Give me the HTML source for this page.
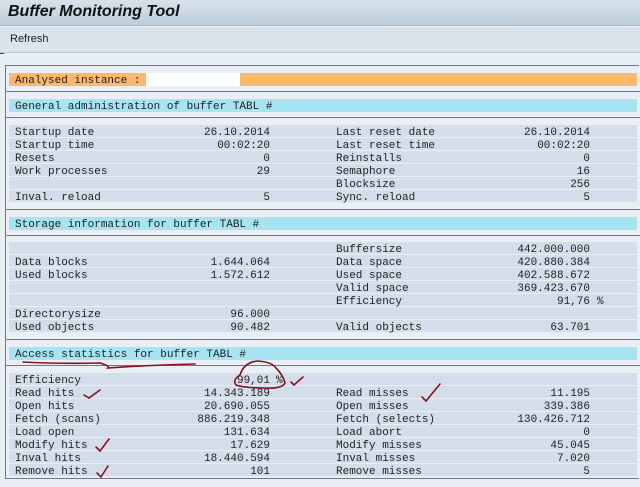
<!DOCTYPE html>
<html><head><meta charset="utf-8"><style>
*{margin:0;padding:0;box-sizing:border-box}
body{width:640px;height:487px;overflow:hidden;background:#e9eff5;position:relative;font-family:"Liberation Mono",monospace;font-size:11px;color:#222}
.t{position:absolute;left:0;top:0;width:640px;height:26px;background:linear-gradient(#d7e1ea,#bfcedc);border-bottom:1px solid #a9b8c7}
.t span{position:absolute;left:8px;top:3px;font:italic bold 16px "Liberation Sans",sans-serif;color:#111}
.tb{position:absolute;left:0;top:27px;width:640px;height:26px;background:#dbe4ed;border-bottom:1px solid #b8c5d2}
.tb span{position:absolute;left:10px;top:6px;font:11px "Liberation Sans",sans-serif;color:#222}
.fr{position:absolute;left:5px;top:65px;width:634px;height:414px;border:1px solid #6f7a85;border-right:none;background:#e9eff5}
.hl{position:absolute;left:5px;width:635px;height:1px;background:#6f7a85}
.bar{position:absolute;left:9px;width:628px;height:13px;line-height:13px;padding-left:6px;padding-top:2px;white-space:pre}
.cy{background:#a6e4f2}
.r{position:absolute;left:9px;width:628px;height:12px;background:#d4deea;line-height:12px;white-space:pre}
.r b{font-weight:normal;position:absolute;top:2px}
.l1{left:6px}.l2{left:327px}
.v1{right:367px;text-align:right}
.v2{right:47px;text-align:right}
.p{left:588px}
</style></head><body>
<div class="t"><span>Buffer Monitoring Tool</span></div>
<div class="tb"><span>Refresh</span></div>
<div style="position:absolute;left:0;top:53px;width:4px;height:1px;background:#d00"></div>
<div class="fr"></div>
<div class="bar" style="top:73px;background:#fdb96b">Analysed instance :</div>
<div style="position:absolute;left:146px;top:73px;width:94px;height:13px;background:#fff"></div>
<div class="hl" style="top:91px"></div>
<div class="bar cy" style="top:99px">General administration of buffer TABL #</div>
<div class="hl" style="top:117px"></div>
<div class="r" style="top:125px"><b class="l1">Startup date</b><b class="v1">26.10.2014</b><b class="l2">Last reset date</b><b class="v2">26.10.2014</b></div>
<div class="r" style="top:138px"><b class="l1">Startup time</b><b class="v1">00:02:20</b><b class="l2">Last reset time</b><b class="v2">00:02:20</b></div>
<div class="r" style="top:151px"><b class="l1">Resets</b><b class="v1">0</b><b class="l2">Reinstalls</b><b class="v2">0</b></div>
<div class="r" style="top:164px"><b class="l1">Work processes</b><b class="v1">29</b><b class="l2">Semaphore</b><b class="v2">16</b></div>
<div class="r" style="top:177px"><b class="l2">Blocksize</b><b class="v2">256</b></div>
<div class="r" style="top:190px"><b class="l1">Inval. reload</b><b class="v1">5</b><b class="l2">Sync. reload</b><b class="v2">5</b></div>
<div class="hl" style="top:209px"></div>
<div class="bar cy" style="top:217px">Storage information for buffer TABL #</div>
<div class="hl" style="top:235px"></div>
<div class="r" style="top:242px"><b class="l2">Buffersize</b><b class="v2">442.000.000</b></div>
<div class="r" style="top:255px"><b class="l1">Data blocks</b><b class="v1">1.644.064</b><b class="l2">Data space</b><b class="v2">420.880.384</b></div>
<div class="r" style="top:268px"><b class="l1">Used blocks</b><b class="v1">1.572.612</b><b class="l2">Used space</b><b class="v2">402.588.672</b></div>
<div class="r" style="top:281px"><b class="l2">Valid space</b><b class="v2">369.423.670</b></div>
<div class="r" style="top:294px"><b class="l2">Efficiency</b><b class="v2">91,76</b><b class="p">%</b></div>
<div class="r" style="top:307px"><b class="l1">Directorysize</b><b class="v1">96.000</b></div>
<div class="r" style="top:320px"><b class="l1">Used objects</b><b class="v1">90.482</b><b class="l2">Valid objects</b><b class="v2">63.701</b></div>
<div class="hl" style="top:339px"></div>
<div class="bar cy" style="top:347px">Access statistics for buffer TABL #</div>
<div class="hl" style="top:365px"></div>
<div class="r" style="top:373px"><b class="l1">Efficiency</b><b class="v1">99,01</b><b style="left:267px">%</b></div>
<div class="r" style="top:386px"><b class="l1">Read hits</b><b class="v1">14.343.189</b><b class="l2">Read misses</b><b class="v2">11.195</b></div>
<div class="r" style="top:399px"><b class="l1">Open hits</b><b class="v1">20.690.055</b><b class="l2">Open misses</b><b class="v2">339.386</b></div>
<div class="r" style="top:412px"><b class="l1">Fetch (scans)</b><b class="v1">886.219.348</b><b class="l2">Fetch (selects)</b><b class="v2">130.426.712</b></div>
<div class="r" style="top:425px"><b class="l1">Load open</b><b class="v1">131.634</b><b class="l2">Load abort</b><b class="v2">0</b></div>
<div class="r" style="top:438px"><b class="l1">Modify hits</b><b class="v1">17.629</b><b class="l2">Modify misses</b><b class="v2">45.045</b></div>
<div class="r" style="top:451px"><b class="l1">Inval hits</b><b class="v1">18.440.594</b><b class="l2">Inval misses</b><b class="v2">7.020</b></div>
<div class="r" style="top:464px"><b class="l1">Remove hits</b><b class="v1">101</b><b class="l2">Remove misses</b><b class="v2">5</b></div>
<svg style="position:absolute;left:0;top:0" width="640" height="487" fill="none" stroke="#8b1020" stroke-width="1.6" stroke-linecap="round">
<path d="M23 362 Q60 364 100 363 Q110 366 108 368 Q150 365 195 364"/>
<path d="M240 375 Q244 362 258 361 Q272 362 276 368 Q283 375 285 383 Q282 389 265 388 Q245 388 236 385 Q232 380 240 375"/>
<path d="M291 382 L294 385 L303 377"/>
<path d="M84 395 L89 398 L100 390"/>
<path d="M422 397 L426 401 L440 384"/>
<path d="M96 447 L100 451 L109 439"/>
<path d="M97 473 L101 477 L108 466"/>
</svg>
</body></html>
